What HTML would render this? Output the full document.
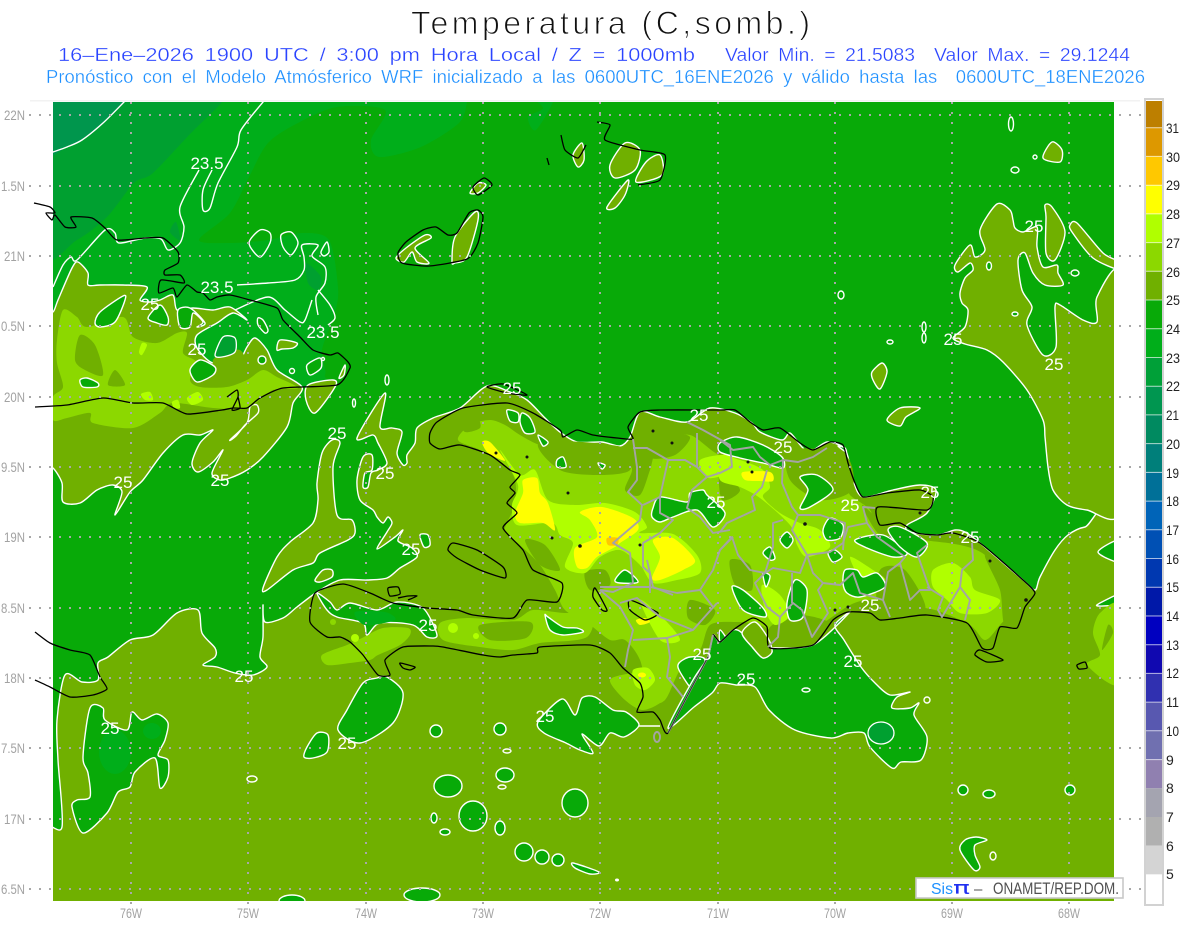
<!DOCTYPE html>
<html lang="es"><head><meta charset="utf-8"><title>Temperatura</title>
<style>
html,body{margin:0;padding:0;background:#fff}
svg{display:block;font-family:"Liberation Sans",sans-serif}
.o{fill:#70b000;stroke:#fff;stroke-width:1.4;stroke-linejoin:round}
.g{fill:#08aa08;stroke:#fff;stroke-width:1.4;stroke-linejoin:round}
.c{fill:none;stroke:#fff;stroke-width:1.4;stroke-linejoin:round}
.f{fill:#70b000}.l{fill:#8cd800}.b{fill:#b0ff00}.y{fill:#ffff00}
.k{fill:none;stroke:#000;stroke-width:1.3;stroke-linejoin:round}
.p{fill:none;stroke:#a4a4a4;stroke-width:1.9;stroke-linejoin:round}
.t text{fill:#fff;font-size:17px;text-anchor:middle}
.a text{fill:#a2a2a2;font-size:14px}
.n text{fill:#222;font-size:14px}
</style></head><body>
<svg width="1200" height="927" viewBox="0 0 1200 927" xmlns="http://www.w3.org/2000/svg">
<defs><clipPath id="m"><rect x="53" y="102" width="1061" height="799"/></clipPath></defs>
<rect width="1200" height="927" fill="#fff"/>
<rect x="30" y="100" width="1110" height="1.5" fill="#f2f2f2"/>
<g clip-path="url(#m)">
<rect x="53" y="102" width="1061" height="799" fill="#08aa08"/>
<polygon fill="#00ae1a" points="40,90 467,90 467,102 459,123 421,147 379,157 371,140 385,110 337,107 298,123 268,143 249,177 230,213 199,240 230,243 268,240 302,233 329,240 338,287 335,313 322,350 325,375 305,388 40,388"/>
<polygon fill="#00ae1a" points="555,95 536,130 528,117 543,108 530,95"/>
<polygon fill="#00a030" points="40,90 222,90 222,102 191,133 153,173 134,183 107,217 77,240 40,255"/>
<polygon fill="#00964d" points="40,90 130,90 124,102 103,123 82,140 67,147 40,157"/>
<polygon fill="#00a030" points="306,263 321,277 318,290 308,283"/>
<polygon fill="#00a030" points="180,240 176,222 170,232"/>
<!-- contours NW -->
<polyline class="c" points="40,157 53,152 67,147 82,140 103,123 124,102 130,95"/>
<polyline class="c" points="270,95 263,102 241,130 237,147 218,183 210,208 203,210 203,190 212,170"/>
<polyline class="c" points="199,170 180,207 184,227 180,243 168,250 161,239 145,238 119,243 115,233 105,230 77,260 71,257 63,265 53,287"/>
<polygon class="c" points="249,243 260,230 270,233 270,243 260,257"/>
<polygon class="c" points="281,235 291,232 298,243 291,255 283,247"/>
<polyline class="c" points="237,285 268,283 295,280 304,270 304,257 302,245 318,245 312,256 325,267 325,283 316,297 318,315"/>
<polygon class="c" points="321,252 327,242 329,252 324,256"/>
<polyline class="c" points="235,310 268,297 285,310 300,322 305,320 312,300"/>
<polyline class="c" points="318,290 330,305 335,318 328,325"/>
<!-- south main olive -->
<polygon class="o" points="45,910 45,830 62,827 58,760 57,720 65,675 82,682 98,680 98,663 108,657 130,640 153,635 177,613 198,610 202,633 215,648 215,657 203,665 217,667 235,673 253,675 267,667 260,657 263,637 263,605 265,622 283,618 297,607 317,592 340,580 367,580 387,578 400,568 417,557 412,548 398,541 403,530 395,537 377,549 387,532 392,523 388,517 383,523 377,517 373,510 360,500 357,480 363,457 372,455 372,470 365,473 363,487 368,487 371,473 378,470 387,463 378,443 373,435 357,438 385,393 380,427 392,428 402,432 397,453 403,465 407,463 407,455 415,443 417,428 433,418 460,408 487,386 510,392 527,400 545,418 560,432 577,442 602,442 620,446 630,437 640,412 660,417 687,422 710,408 735,413 752,423 760,432 782,440 790,433 802,447 810,452 827,442 843,447 848,457 853,480 863,497 893,490 920,485 936,490 927,513 907,525 910,532 937,535 955,530 965,532 980,543 1023,580 1035,590 1040,577 1055,550 1068,535 1085,527 1120,525 1125,910"/>
<!-- west olive -->
<polygon class="o" points="45,468 53,468 62,483 63,502 80,503 97,490 113,485 122,492 115,515 130,492 143,480 163,453 183,435 200,435 213,430 200,443 192,463 198,472 213,462 223,450 212,473 220,480 230,478 247,470 263,457 287,427 293,403 302,387 277,370 267,350 255,338 247,347 240,360 233,355 213,363 197,348 197,335 217,323 233,313 247,320 230,307 213,310 193,308 177,310 173,295 160,300 150,302 140,300 147,287 123,285 100,285 88,285 88,273 78,262 72,268 58,300 53,312 45,312"/>
<polygon class="o" points="263,588 277,557 290,542 313,523 318,500 317,483 322,453 332,440 340,443 333,467 337,515 352,520 355,533 348,540 320,553 313,563 293,570 267,590"/>
<polygon class="o" points="308,385 333,380 335,387 315,413 306,400"/>
<polygon class="o" points="230,440 247,423 250,407 257,405 258,413 245,425 236,436"/>
<polygon class="o" points="315,580 323,570 332,570 332,577 320,582"/>
<polygon class="o" points="277,350 280,340 297,343 293,348 282,349"/>
<polygon class="o" points="339,378 345,365 344,375"/>
<!-- NE olive -->
<polygon class="o" points="997,204 1010,210 1013,220 1015,228 1023,232 1037,227 1037,247 1043,267 1057,265 1058,273 1063,285 1045,285 1033,273 1025,253 1018,260 1022,290 1032,307 1027,325 1043,355 1056,347 1055,307 1060,305 1083,320 1097,322 1097,297 1120,272 1125,400 1120,513 1087,510 1067,505 1053,490 1048,467 1045,437 1043,420 1027,390 1003,362 987,350 965,344 953,338 965,327 968,310 962,303 960,293 965,278 973,270 970,263 958,272 955,265 970,245 975,257 985,250 980,230"/>
<polygon class="o" points="1070,225 1077,223 1103,253 1120,262 1120,270 1093,258 1072,232"/>
<polygon class="o" points="1045,205 1052,207 1065,232 1055,260 1046,253 1046,217"/>
<polygon class="g" points="1120,540 1098,552 1120,562"/>
<polygon class="g" points="1120,594 1100,603 1098,606 1120,604"/>
<ellipse class="g" cx="989" cy="266" rx="2.5" ry="4"/><ellipse class="g" cx="1075" cy="273" rx="4" ry="3"/><ellipse class="g" cx="1015" cy="314" rx="3" ry="2"/>
<!-- small olive islands -->
<polygon class="o" points="396,258 406,248 425,235 431,238 415,248 429,263 417,262 412,252 404,262"/>
<polygon class="o" points="452,262 455,237 475,212 478,220 467,257 455,263"/>
<polygon class="o" points="470,193 478,183 486,185 478,193"/>
<polygon class="o" points="610,165 625,143 640,150 635,170 615,178"/>
<polygon class="o" points="607,207 628,180 625,195 615,208"/>
<polygon class="o" points="636,182 646,162 660,155 662,175"/>
<polygon class="o" points="573,155 582,143 584,160 578,167"/>
<polygon class="o" points="1043,158 1052,142 1062,150 1060,162"/>
<ellipse class="c" cx="1011" cy="124" rx="2.5" ry="7"/><ellipse class="c" cx="1015" cy="170" rx="4" ry="3"/><ellipse class="c" cx="1035" cy="157" rx="2" ry="2"/>
<ellipse class="c" cx="924" cy="327" rx="2" ry="5"/><ellipse class="c" cx="924" cy="338" rx="2" ry="5"/><ellipse class="c" cx="841" cy="295" rx="3" ry="4"/><ellipse class="c" cx="890" cy="342" rx="3" ry="2"/>
<polygon class="o" points="872,372 882,363 887,372 880,389 873,380"/>
<polygon class="o" points="887,420 900,408 920,408 906,417 900,426"/>
<ellipse class="c" cx="387" cy="380" rx="2" ry="5"/><ellipse class="c" cx="354" cy="403" rx="1.5" ry="4"/>
<!-- west shade -->
<polygon class="l" points="57,340 63,310 77,317 87,327 123,317 133,337 157,343 177,333 187,333 183,353 196,362 190,380 200,387 227,387 247,380 263,370 277,377 298,388 273,390 247,408 213,408 173,403 160,413 133,428 93,423 90,413 67,418 53,420 53,397 63,387 57,363"/>
<polygon class="f" points="80,335 95,345 103,375 85,370 75,360"/>
<polygon class="f" points="115,370 125,385 108,385"/>
<polygon class="f" points="213,360 240,350 247,375 225,385"/>
<polygon class="b" points="142,343 147,345 142,355 139,352"/>
<polygon class="b" points="141,394 150,392 153,400 145,400"/>
<polygon class="b" points="187,398 198,392 203,400 192,405"/>
<polygon class="b" points="172,402 178,400 180,408 174,408"/>
<!-- Hispaniola shade -->
<polygon class="l" points="458,440 470,425 490,420 505,425 520,435 540,445 560,445 600,450 625,455 632,470 625,490 640,495 650,470 660,440 690,435 720,455 750,450 780,465 800,460 815,470 830,465 845,480 850,495 870,510 880,535 905,540 920,540 960,545 985,555 1010,585 1020,600 1000,625 985,640 970,625 935,610 900,605 870,600 850,605 820,625 790,640 760,625 735,622 710,625 700,650 680,670 665,700 650,700 640,660 625,640 610,640 590,625 565,610 555,590 540,565 520,545 505,530 515,505 515,480 505,465 480,450"/>
<polygon class="f" points="540,442 560,470 600,475 630,470 622,447"/>
<polygon class="f" points="790,450 845,455 852,490 820,500 790,480"/>
<polygon class="f" points="862,505 880,520 905,530 880,535"/>
<polygon class="f" points="880,570 905,570 925,610 880,610"/>
<polygon class="f" points="985,555 1015,580 1025,605 1005,625 1000,590"/>
<polygon class="f" points="770,627 800,615 833,625 815,645 772,648"/>
<polygon class="f" points="460,420 477,418 480,428 465,432"/>
<polygon class="f" points="555,515 570,510 580,530 565,535"/>
<polygon class="f" points="640,440 665,432 690,437 675,455 650,458"/>
<polygon class="f" points="525,540 545,545 560,570 540,565"/>
<polygon class="f" points="720,470 740,490 722,500"/>
<polygon class="f" points="585,572 605,570 610,585 590,590"/>
<polygon class="f" points="730,560 750,565 752,590 735,585"/>
<polygon class="f" points="690,600 715,610 705,625 688,618"/>
<polygon class="b" points="500,450 520,475 535,470 548,500 575,505 605,503 635,512 647,527 640,533 673,534 697,555 700,573 677,580 653,583 640,565 620,550 600,557 585,573 565,567 573,543 560,535 552,523 517,525 512,505 518,485"/>
<polygon class="b" points="720,457 740,460 763,470 770,487 763,497 780,513 800,523 820,530 830,547 807,557 797,545 790,525 760,498 740,487 720,480"/>
<polygon class="b" points="933,570 953,563 970,577 975,590 1000,600 987,613 960,613 947,600 933,587"/>
<polygon class="b" points="850,557 873,570 885,580 865,585"/>
<polygon class="b" points="700,460 730,455 735,470 708,478"/>
<polygon class="b" points="762,585 780,595 790,615 775,625 765,610"/>
<polygon class="b" points="640,600 665,620 680,640 660,640"/>
<polygon class="y" points="482,442 490,442 505,460 497,458 487,452"/>
<polygon class="y" points="523,480 537,478 540,493 548,503 555,530 543,523 520,523 515,513 523,493"/>
<polygon class="y" points="580,512 602,507 633,518 638,530 620,543 615,547 597,557 587,568 577,567 575,548 597,537 590,520"/>
<polygon class="y" points="653,540 673,538 695,560 683,570 660,580 652,578 660,557"/>
<polygon class="y" points="743,472 770,472 773,481 760,481 745,480"/>
<polygon class="y" points="636,620 645,618 650,622 640,625"/>
<polygon fill="#ffc800" points="607,538 618,538 617,545 608,545"/>
<!-- south Haiti shade -->
<polygon class="l" points="440,623 467,618 513,620 533,610 567,613 593,607 587,637 540,643 513,650 480,647 443,640"/>
<polygon class="f" points="480,625 530,622 526,638 490,640"/>
<circle class="b" cx="453" cy="628" r="5"/><circle class="b" cx="476" cy="636" r="3"/>
<polygon class="l" points="610,680 633,673 653,673 663,680 663,700 643,710 625,700"/>
<polygon class="b" points="633,670 648,668 655,680 645,690 635,685"/>
<ellipse class="y" cx="642" cy="675" rx="4" ry="2.5"/>
<polygon class="l" points="322,655 347,645 362,638 383,628 408,628 410,635 400,645 378,655 370,660 350,663 327,665"/>
<circle class="b" cx="355" cy="638" r="4"/><circle class="l" cx="333" cy="622" r="3"/>
<polygon class="l" points="1120,606 1100,613 1093,633 1100,655 1087,665 1120,684"/>
<polygon class="f" points="1108,625 1113,633 1102,650"/>
<!-- green holes -->
<polygon class="g" points="95,323 100,312 123,296 125,300 115,322 100,327"/>
<polygon class="g" points="148,318 160,305 168,317 167,325 157,323"/>
<polygon class="g" points="178,310 180,327 190,327 193,313 203,322 197,327 205,323 190,308"/>
<polygon class="g" points="190,370 200,360 215,367 213,375 197,382"/>
<polygon class="g" points="80,380 87,378 98,383 97,387 83,387"/>
<polygon fill="#00a030" stroke="#fff" stroke-width="1.3" points="215,355 223,337 235,338 235,352 222,357"/>
<polygon class="g" points="258,318 263,320 268,330 265,333 258,325"/>
<polygon class="g" points="307,365 320,358 321,368 310,375"/>
<circle class="g" cx="262" cy="360" r="4"/><circle class="g" cx="292" cy="371" r="2.5"/><circle class="g" cx="323" cy="359" r="1.5"/>
<polygon class="g" points="317,593 330,602 337,610 350,603 377,610 397,602 423,608 437,635 427,637 413,625 380,623 367,635 363,623 337,617 327,610"/>
<polygon fill="#00ae1a" points="355,612 385,612 395,620 365,625"/>
<polygon class="g" points="653,508 660,497 687,502 690,493 703,490 707,495 725,513 713,527 697,510 673,517 660,522 652,517"/>
<polygon class="g" points="615,580 625,570 638,582 620,583"/>
<polygon class="g" points="507,410 518,413 518,422 510,421"/>
<polygon class="g" points="522,413 530,418 535,432 525,433 520,422"/>
<polygon class="g" points="538,435 548,442 543,446"/>
<polygon class="g" points="557,460 563,457 566,467 557,467"/>
<polygon class="g" points="598,463 605,465 602,469"/>
<polygon class="g" points="420,535 428,535 430,545 424,547"/>
<polygon class="g" points="545,615 548,617 563,627 577,628 583,632 563,635 550,630"/>
<polygon class="g" points="720,443 737,437 763,445 782,457 783,468 763,463 740,458 720,452"/>
<polygon class="g" points="800,477 817,475 833,490 810,507 800,508 808,490"/>
<polygon class="g" points="823,530 830,518 843,525 840,538 827,540"/>
<polygon class="g" points="780,540 787,532 793,540 787,548"/>
<polygon class="g" points="763,553 770,547 775,558 770,560"/>
<polygon class="g" points="828,553 835,550 842,557 833,562"/>
<polygon class="g" points="855,540 883,535 907,553 893,557 867,548"/>
<polygon class="g" points="888,530 900,527 927,543 917,557 900,547"/>
<polygon class="g" points="845,570 857,570 863,577 877,573 885,587 860,597 847,593 843,583"/>
<polygon class="g" points="732,587 743,590 763,608 765,617 743,610"/>
<polygon class="g" points="763,573 770,576 766,587"/>
<polygon class="g" points="787,603 795,580 807,590 803,617 790,620"/>
<polygon class="g" points="720,630 727,640 720,642"/>
<polygon class="g" points="679,663 690,657 705,660 696,687 690,687 679,670"/>
<polygon class="g" points="838,446 845,448 846,452"/>
<polygon class="g" points="668,728 694,707 712,693 720,683 736,685 755,687 769,710 795,730 831,738 848,733 864,733 870,747 892,768 901,762 921,760 927,737 914,715 919,703 910,708 892,708 897,697 910,692 890,695 875,683 861,667 844,640 835,625 850,612 813,645 770,648 772,652 763,658 753,648 742,633 733,630 720,642 713,635 708,657 693,680"/>
<polygon class="o" points="742,633 753,648 763,658 772,652 768,638 755,622"/>
<ellipse cx="881" cy="733" rx="13" ry="11" fill="#00a030" stroke="#fff" stroke-width="1.3"/>
<polygon class="g" points="538,722 562,699 575,715 582,698 595,697 613,710 626,712 639,725 624,737 610,733 599,746 582,734 593,753 580,750 566,743 544,733"/>
<polyline class="c" points="639,726 650,726 660,726"/>
<polygon class="g" points="90,708 103,708 105,720 127,730 132,712 142,720 157,714 168,723 165,740 158,755 168,760 168,777 160,788 155,758 135,772 130,787 118,792 107,813 83,833 72,807 77,800 90,797 88,773 83,757"/>
<ellipse cx="115" cy="752" rx="16" ry="22" fill="#00ae1a"/><ellipse cx="152" cy="731" rx="9" ry="8" fill="#00ae1a"/>
<polygon class="g" points="387,677 403,693 393,723 360,743 338,730 347,710 363,683 377,678"/>
<polygon class="g" points="317,733 328,735 327,752 313,758 304,757 307,747"/>
<circle class="g" cx="436" cy="731" r="6"/><circle class="g" cx="500" cy="729" r="6"/>
<ellipse class="g" cx="505" cy="775" rx="9" ry="7"/><ellipse class="g" cx="473" cy="816" rx="14" ry="15"/>
<ellipse class="g" cx="448" cy="786" rx="14" ry="11"/><ellipse class="g" cx="575" cy="803" rx="13" ry="14"/>
<ellipse class="g" cx="500" cy="828" rx="5" ry="7"/><ellipse class="g" cx="524" cy="852" rx="9" ry="9"/>
<circle class="g" cx="542" cy="857" r="7"/><circle class="g" cx="558" cy="860" r="6"/>
<polygon class="g" points="573,863 599,872 590,874 575,868"/><ellipse class="g" cx="434" cy="818" rx="3" ry="5"/><ellipse class="g" cx="445" cy="832" rx="5" ry="3"/>
<ellipse class="g" cx="422" cy="895" rx="18" ry="7"/><ellipse class="g" cx="292" cy="901" rx="13" ry="6"/>
<ellipse class="c" cx="502" cy="787" rx="4" ry="2"/><ellipse class="c" cx="507" cy="751" rx="4" ry="2"/><ellipse class="c" cx="252" cy="779" rx="5" ry="3"/>
<circle class="g" cx="963" cy="790" r="5"/><ellipse class="g" cx="989" cy="794" rx="6" ry="4"/><circle class="g" cx="1070" cy="790" r="5"/>
<polygon class="g" points="976,837 987,840 975,845 975,855 980,867 974,870 960,850 965,840"/>
<ellipse class="c" cx="993" cy="856" rx="3" ry="4"/><ellipse class="c" cx="927" cy="700" rx="3" ry="3"/>
<ellipse cx="617" cy="880" rx="2" ry="1.5" fill="#fff"/><ellipse class="c" cx="806" cy="690" rx="4" ry="2"/>
</g>
<!-- coast -->
<polygon class="k" points="487,387 503,384 527,395 507,393"/>
<polygon class="k" points="430,443 430,433 437,422 463,408 507,403 533,413 560,430 563,437 577,430 593,435 617,438 633,439 628,427 640,412 660,410 720,410 735,410 750,422 763,430 780,428 800,443 813,450 830,442 843,445 848,463 855,483 863,497 887,493 920,490 933,497 927,510 878,507 880,525 900,523 917,533 937,535 953,533 980,543 1023,580 1035,593 1025,607 1017,628 1000,627 993,648 982,648 967,623 927,615 900,618 880,620 870,613 848,612 833,620 813,645 770,648 767,627 753,618 733,630 720,642 713,635 708,657 693,685 668,733 660,720 653,712 637,712 643,697 640,683 623,668 610,653 590,645 540,647 537,653 513,655 500,657 483,655 443,647 433,646 403,647 385,660 390,675 378,675 363,655 350,642 340,637 327,637 310,622 315,593 343,584 370,593 393,603 427,608 457,610 473,615 513,618 527,600 557,602 562,583 533,570 523,550 503,528 517,513 507,503 515,493 510,487 520,475 510,470 490,455 460,445 440,449"/>
<polygon class="k" points="448,550 453,543 477,550 503,567 505,578 480,570 457,558"/>
<polygon class="k" points="595,588 607,610 602,610 593,597"/>
<polygon class="k" points="630,600 658,613 645,620 630,610"/>
<polygon class="k" points="400,663 415,667 410,670 403,668"/>
<polygon class="k" points="388,588 398,587 400,594 390,596"/>
<polyline class="k" points="398,598 408,596 417,596 408,600"/>
<polygon class="k" points="980,650 1003,660 987,662 975,655"/>
<polygon class="k" points="1077,665 1085,662 1087,668 1079,669"/>
<polyline class="k" points="34,203 50,207 55,213 46,213 52,220 55,215 65,227 76,227 71,217 92,218 105,228 117,240 145,238 163,238 178,252 178,263 165,270 165,275 180,275 184,283 161,280 159,293 173,288 177,297 187,285 197,292 203,293 210,300 217,297 230,295 250,300 277,308 283,320 300,337 313,350 330,355 338,353 348,362 350,368 337,385 283,388 260,398 247,408 233,408 222,410 187,414 163,403 133,403 103,398 67,405 35,407"/>
<polyline class="k" points="227,397 237,390 238,397 232,410 240,408 238,397"/>
<polyline class="k" points="35,632 50,643 70,650 90,655 100,677 107,689 93,695 70,697 50,687 35,680"/>
<polygon class="k" points="478,210 483,217 478,243 467,259 429,266 402,263 398,253 406,242 423,230 436,227 448,235 457,233 469,213"/>
<polygon class="k" points="473,187 484,178 492,185 478,195"/>
<polyline class="k" points="547,158 549,165"/>
<polyline class="k" points="561,135 565,150 578,158 586,145"/>
<polyline class="k" points="597,122 610,125 605,140 640,150 665,155 660,180 638,185"/>
<g fill="#111"><circle cx="496" cy="453" r="1.5"/><circle cx="527" cy="457" r="1.5"/><circle cx="568" cy="493" r="1.5"/><circle cx="552" cy="538" r="1.5"/><circle cx="580" cy="546" r="1.8"/><circle cx="640" cy="545" r="1.5"/><circle cx="653" cy="431" r="1.5"/><circle cx="672" cy="443" r="1.5"/><circle cx="748" cy="462" r="1.5"/><circle cx="752" cy="472" r="1.5"/><circle cx="805" cy="524" r="1.8"/><circle cx="835" cy="610" r="1.5"/><circle cx="848" cy="607" r="1.5"/><circle cx="990" cy="561" r="1.5"/><circle cx="1026" cy="600" r="1.8"/><circle cx="920" cy="513" r="1.5"/></g>
<!-- provinces -->
<g class="p">
<polyline points="633,439 637,467 637,480 628,492 642,505 640,520 613,543 630,553 633,583 613,592 600,590"/>
<polyline points="600,590 620,607 633,630 628,650 625,667"/>
<polyline points="633,448 647,448 668,460 685,460 697,467 707,477 692,490 687,508 700,517 713,533 730,530"/>
<polyline points="668,460 660,497 643,505"/>
<polyline points="697,433 697,467"/>
<polyline points="687,422 703,430 730,445 732,467 720,473 707,477"/>
<polyline points="660,497 660,513 673,520 660,533 643,543 643,567 650,573 650,593"/>
<polyline points="600,587 650,587 677,593 700,590 713,607"/>
<polyline points="733,537 720,550 713,570 700,590"/>
<polyline points="667,638 670,657 667,677 683,697"/>
<polyline points="667,638 693,630 717,603"/>
<polyline points="633,640 667,638"/>
<polyline points="647,560 653,587 673,595"/>
<polyline points="620,603 637,598 660,617 673,622 693,630"/>
<polyline points="720,440 733,450 753,447 760,457 770,465 783,460 798,462 813,457 827,448"/>
<polyline points="783,460 782,483 792,507 798,515 820,515 845,523 843,550"/>
<polyline points="767,470 762,487 752,497 755,510 727,523 720,532"/>
<polyline points="798,515 792,530 807,555 800,573 773,568 765,573 750,570 738,555 732,537 720,550"/>
<polyline points="783,520 773,523 773,547 765,573 755,583 767,607 780,617 778,637 768,647"/>
<polyline points="807,555 830,552 843,543 848,527 867,523 863,507 875,508"/>
<polyline points="807,555 813,573 823,583 840,585 853,573 860,593 883,600"/>
<polyline points="823,583 818,590 828,613 812,637 802,610 793,603 780,617"/>
<polyline points="792,573 792,603"/>
<polyline points="867,523 877,537 905,557 900,563 888,572 883,600 890,617"/>
<polyline points="900,563 910,600 920,590 930,590 917,553 927,545"/>
<polyline points="927,587 943,597 938,610 942,617 960,587 962,570 973,560 972,543"/>
<polyline points="960,587 970,600 965,620"/>
<polyline points="668,733 693,685 708,657 713,635"/>
<ellipse cx="657" cy="737" rx="3" ry="5"/>
</g>
<polyline fill="none" stroke="#333" stroke-width="1" points="668,733 693,685 708,657"/>
<!-- grid -->
<g stroke="#a8a8a8" stroke-width="2" stroke-dasharray="2 8" fill="none">
<path d="M29 115H1142M29 186H1142M29 256H1142M29 326H1142M29 397H1142M29 467H1142M29 537H1142M29 608H1142M29 678H1142M29 748H1142M29 819H1142M29 889H1142"/>
<path d="M131 102V907M248 102V907M366 102V907M483 102V907M600 102V907M718 102V907M835 102V907M952 102V907M1069 102V907"/>
</g>
<!-- labels -->
<g class="t">
<text x="207" y="169">23.5</text><text x="217" y="293">23.5</text><text x="323" y="338">23.5</text>
<text x="150" y="310">25</text><text x="197" y="355">25</text><text x="123" y="488">25</text><text x="220" y="486">25</text>
<text x="337" y="439">25</text><text x="385" y="479">25</text><text x="411" y="555">25</text><text x="512" y="394">25</text>
<text x="699" y="421">25</text><text x="783" y="453">25</text><text x="716" y="508">25</text><text x="850" y="511">25</text>
<text x="930" y="498">25</text><text x="970" y="543">25</text><text x="1034" y="232">25</text><text x="953" y="345">25</text>
<text x="1054" y="370">25</text><text x="870" y="611">25</text><text x="853" y="667">25</text><text x="702" y="660">25</text>
<text x="746" y="685">25</text><text x="545" y="722">25</text><text x="428" y="631">25</text><text x="244" y="682">25</text>
<text x="347" y="749">25</text><text x="110" y="734">25</text>
</g>
<g class="a">
<text x="4" y="120" textLength="21" lengthAdjust="spacingAndGlyphs">22N</text>
<text x="1" y="191" textLength="24" lengthAdjust="spacingAndGlyphs">1.5N</text>
<text x="4" y="261" textLength="21" lengthAdjust="spacingAndGlyphs">21N</text>
<text x="1" y="331" textLength="24" lengthAdjust="spacingAndGlyphs">0.5N</text>
<text x="4" y="402" textLength="21" lengthAdjust="spacingAndGlyphs">20N</text>
<text x="1" y="472" textLength="24" lengthAdjust="spacingAndGlyphs">9.5N</text>
<text x="4" y="542" textLength="21" lengthAdjust="spacingAndGlyphs">19N</text>
<text x="1" y="613" textLength="24" lengthAdjust="spacingAndGlyphs">8.5N</text>
<text x="4" y="683" textLength="21" lengthAdjust="spacingAndGlyphs">18N</text>
<text x="1" y="753" textLength="24" lengthAdjust="spacingAndGlyphs">7.5N</text>
<text x="4" y="824" textLength="21" lengthAdjust="spacingAndGlyphs">17N</text>
<text x="1" y="894" textLength="24" lengthAdjust="spacingAndGlyphs">6.5N</text>
<text x="120" y="918" textLength="22" lengthAdjust="spacingAndGlyphs">76W</text>
<text x="237" y="918" textLength="22" lengthAdjust="spacingAndGlyphs">75W</text>
<text x="355" y="918" textLength="22" lengthAdjust="spacingAndGlyphs">74W</text>
<text x="472" y="918" textLength="22" lengthAdjust="spacingAndGlyphs">73W</text>
<text x="589" y="918" textLength="22" lengthAdjust="spacingAndGlyphs">72W</text>
<text x="707" y="918" textLength="22" lengthAdjust="spacingAndGlyphs">71W</text>
<text x="824" y="918" textLength="22" lengthAdjust="spacingAndGlyphs">70W</text>
<text x="941" y="918" textLength="22" lengthAdjust="spacingAndGlyphs">69W</text>
<text x="1058" y="918" textLength="22" lengthAdjust="spacingAndGlyphs">68W</text>
</g>
<!-- header -->
<text x="411" y="34" font-size="32" textLength="399" lengthAdjust="spacing" fill="#111" stroke="#fff" stroke-width=".95" paint-order="fill stroke">Temperatura (C,somb.)</text>
<g font-size="18.5" fill="#2a44ff" stroke="#fff" stroke-width=".3" paint-order="fill stroke" word-spacing="4" xml:space="preserve">
<text x="58" y="61" textLength="637" lengthAdjust="spacingAndGlyphs">16–Ene–2026  1900 UTC / 3:00 pm Hora Local / Z = 1000mb</text>
<text x="725" y="61" textLength="190" lengthAdjust="spacingAndGlyphs">Valor Min. = 21.5083</text>
<text x="934" y="61" textLength="196" lengthAdjust="spacingAndGlyphs">Valor Max. = 29.1244</text>
</g>
<text x="46" y="83" font-size="18" fill="#1e90ff" stroke="#fff" stroke-width=".3" paint-order="fill stroke" word-spacing="4" textLength="1099" lengthAdjust="spacingAndGlyphs" xml:space="preserve">Pronóstico con el Modelo Atmósferico WRF inicializado a las 0600UTC_16ENE2026 y válido hasta las  0600UTC_18ENE2026</text>
<!-- colorbar -->
<rect x="1145" y="99" width="18" height="806" fill="#fff" stroke="#d2d2d2" stroke-width="2"/>
<g>
<rect x="1146" y="101" width="16" height="26.7" fill="#bd7f00"/>
<rect x="1146" y="127.7" width="16" height="28.7" fill="#dd9800"/>
<rect x="1146" y="156.4" width="16" height="28.7" fill="#ffc800"/>
<rect x="1146" y="185.2" width="16" height="28.7" fill="#ffff00"/>
<rect x="1146" y="213.9" width="16" height="28.7" fill="#b0ff00"/>
<rect x="1146" y="242.6" width="16" height="28.7" fill="#8cd800"/>
<rect x="1146" y="271.3" width="16" height="28.7" fill="#70b000"/>
<rect x="1146" y="300" width="16" height="28.7" fill="#08aa08"/>
<rect x="1146" y="328.8" width="16" height="28.7" fill="#00ae1a"/>
<rect x="1146" y="357.5" width="16" height="28.7" fill="#00a038"/>
<rect x="1146" y="386.2" width="16" height="28.7" fill="#009650"/>
<rect x="1146" y="414.9" width="16" height="28.7" fill="#008a60"/>
<rect x="1146" y="443.6" width="16" height="28.7" fill="#007f7a"/>
<rect x="1146" y="472.4" width="16" height="28.7" fill="#007098"/>
<rect x="1146" y="501.1" width="16" height="28.7" fill="#0064b8"/>
<rect x="1146" y="529.8" width="16" height="28.7" fill="#0050b4"/>
<rect x="1146" y="558.5" width="16" height="28.7" fill="#0038b0"/>
<rect x="1146" y="587.2" width="16" height="28.7" fill="#0018a8"/>
<rect x="1146" y="616" width="16" height="28.7" fill="#0000c0"/>
<rect x="1146" y="644.7" width="16" height="28.7" fill="#1008b0"/>
<rect x="1146" y="673.4" width="16" height="28.7" fill="#3030b0"/>
<rect x="1146" y="702.1" width="16" height="28.7" fill="#5858b0"/>
<rect x="1146" y="730.8" width="16" height="28.7" fill="#7070b0"/>
<rect x="1146" y="759.6" width="16" height="28.7" fill="#9080b0"/>
<rect x="1146" y="788.3" width="16" height="28.7" fill="#a4a4b0"/>
<rect x="1146" y="817" width="16" height="28.7" fill="#b0b0b0"/>
<rect x="1146" y="845.7" width="16" height="28.7" fill="#d4d4d4"/>
<rect x="1146" y="874.4" width="16" height="28.6" fill="#ffffff"/>
</g>
<g stroke="#fff" stroke-opacity=".65" stroke-width="1">
<path d="M1146 127.7h16M1146 156.4h16M1146 185.2h16M1146 213.9h16M1146 242.6h16M1146 271.3h16M1146 300h16M1146 328.8h16M1146 357.5h16M1146 386.2h16M1146 414.9h16M1146 443.6h16M1146 472.4h16M1146 501.1h16M1146 529.8h16M1146 558.5h16M1146 587.2h16M1146 616h16M1146 644.7h16M1146 673.4h16M1146 702.1h16M1146 730.8h16M1146 759.6h16"/>
</g>
<g class="n">
<text x="1166" y="133" textLength="13" lengthAdjust="spacingAndGlyphs">31</text>
<text x="1166" y="162" textLength="14" lengthAdjust="spacingAndGlyphs">30</text>
<text x="1166" y="190" textLength="14" lengthAdjust="spacingAndGlyphs">29</text>
<text x="1166" y="219" textLength="14" lengthAdjust="spacingAndGlyphs">28</text>
<text x="1166" y="248" textLength="14" lengthAdjust="spacingAndGlyphs">27</text>
<text x="1166" y="277" textLength="14" lengthAdjust="spacingAndGlyphs">26</text>
<text x="1166" y="305" textLength="14" lengthAdjust="spacingAndGlyphs">25</text>
<text x="1166" y="334" textLength="14" lengthAdjust="spacingAndGlyphs">24</text>
<text x="1166" y="363" textLength="14" lengthAdjust="spacingAndGlyphs">23</text>
<text x="1166" y="391" textLength="14" lengthAdjust="spacingAndGlyphs">22</text>
<text x="1166" y="420" textLength="13" lengthAdjust="spacingAndGlyphs">21</text>
<text x="1166" y="449" textLength="14" lengthAdjust="spacingAndGlyphs">20</text>
<text x="1166" y="478" textLength="13" lengthAdjust="spacingAndGlyphs">19</text>
<text x="1166" y="506" textLength="13" lengthAdjust="spacingAndGlyphs">18</text>
<text x="1166" y="535" textLength="13" lengthAdjust="spacingAndGlyphs">17</text>
<text x="1166" y="564" textLength="13" lengthAdjust="spacingAndGlyphs">16</text>
<text x="1166" y="592" textLength="13" lengthAdjust="spacingAndGlyphs">15</text>
<text x="1166" y="621" textLength="13" lengthAdjust="spacingAndGlyphs">14</text>
<text x="1166" y="650" textLength="13" lengthAdjust="spacingAndGlyphs">13</text>
<text x="1166" y="678" textLength="13" lengthAdjust="spacingAndGlyphs">12</text>
<text x="1166" y="707" textLength="13" lengthAdjust="spacingAndGlyphs">11</text>
<text x="1166" y="736" textLength="13" lengthAdjust="spacingAndGlyphs">10</text>
<text x="1166" y="765">9</text><text x="1166" y="793">8</text><text x="1166" y="822">7</text><text x="1166" y="851">6</text><text x="1166" y="879">5</text>
</g>
<!-- footer box -->
<rect x="916" y="878" width="207" height="20" fill="#fff" stroke="#c8c8c8" stroke-width="1.6"/>
<text x="931" y="894" font-size="15.5" fill="#1e90ff" textLength="22" lengthAdjust="spacingAndGlyphs">Sis</text>
<text x="953" y="894" font-size="18" fill="#2030f0" textLength="17" lengthAdjust="spacingAndGlyphs" style="font-family:'DejaVu Sans',sans-serif">π</text>
<text x="974" y="894" font-size="15" fill="#505050">–</text>
<text x="993" y="894" font-size="17" fill="#505050" textLength="126" lengthAdjust="spacingAndGlyphs">ONAMET/REP.DOM.</text>
</svg>
<script>
(function(){
var ns='http://www.w3.org/2000/svg';
var els=document.querySelectorAll('svg polygon,svg polyline');
for(var q=0;q<els.length;q++){
var e=els[q];
if(e.parentNode.getAttribute('class')==='p')continue;
var pts=e.getAttribute('points').trim().split(/\s+/).map(function(s){return s.split(',').map(Number)});
var n=pts.length;if(n<3)continue;
var closed=e.tagName.toLowerCase()==='polygon';
var t=e.getAttribute('class')==='k'?10:7;
var g=function(i){return closed?pts[(i+n)%n]:pts[Math.max(0,Math.min(n-1,i))]};
var d='M'+pts[0][0]+' '+pts[0][1];
var m=closed?n:n-1;
for(var i=0;i<m;i++){
var a=g(i-1),b=g(i),c=g(i+1),f=g(i+2);
d+='C'+(b[0]+(c[0]-a[0])/t).toFixed(1)+' '+(b[1]+(c[1]-a[1])/t).toFixed(1)+' '+(c[0]-(f[0]-b[0])/t).toFixed(1)+' '+(c[1]-(f[1]-b[1])/t).toFixed(1)+' '+c[0]+' '+c[1];
}
if(closed)d+='Z';
var p=document.createElementNS(ns,'path');
for(var k=0;k<e.attributes.length;k++){var at=e.attributes[k];if(at.name!=='points')p.setAttribute(at.name,at.value);}
p.setAttribute('d',d);
e.parentNode.replaceChild(p,e);
}
})();
</script>
</body></html>
